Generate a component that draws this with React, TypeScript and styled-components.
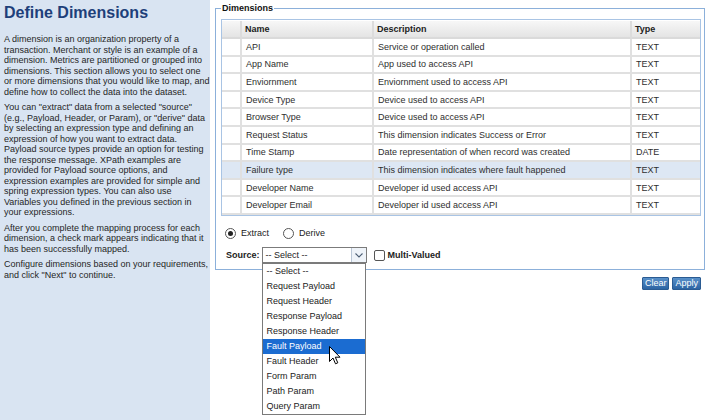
import React from "react";
import styled, { createGlobalStyle } from "styled-components";

const GlobalStyle = createGlobalStyle`
  html, body { margin: 0; padding: 0; background: #ffffff; }
  body { font-family: "Liberation Sans", Arial, sans-serif; }
  #root { width: 708px; height: 420px; overflow: hidden; }
`;

const Page = styled.div`
  display: flex;
  width: 708px;
  height: 420px;
`;

const Sidebar = styled.aside`
  flex: none;
  width: 210px;
  box-sizing: border-box;
  background: #d9e4f2;
  padding: 4px 2px 0 4px;
  color: #262626;
`;

const Title = styled.h1`
  margin: 0 0 12px;
  font-size: 16px;
  line-height: 18px;
  font-weight: bold;
  color: #1e3f7a;
`;

const Para = styled.p`
  margin: 0 0 5px;
  font-size: 9px;
  line-height: 10.5px;
  white-space: nowrap;
`;

const Main = styled.main`
  flex: 1;
  min-width: 0;
  padding: 3px 3px 0 5px;
  font-size: 9px;
  color: #333;
`;

const Fieldset = styled.fieldset`
  margin: 0;
  min-width: 0;
  padding: 5px 3px 6px 5px;
  border: 1px solid #8cb0da;
`;

const Legend = styled.legend`
  padding: 0 1px;
  font-size: 9px;
  line-height: 11px;
  font-weight: bold;
  color: #111;
`;

const TableBox = styled.div`
  border: 1px solid #a9c4e4;
  padding: 1px 0 0;
  height: 194px;
  background: #fff;
`;

const Table = styled.table`
  width: 100%;
  table-layout: fixed;
  border-collapse: separate;
  border-spacing: 0;
`;

const HeadCell = styled.th`
  height: 16px;
  padding: 0 0 0 3px;
  text-align: left;
  font-weight: bold;
  font-size: 9px;
  color: #222;
  background: linear-gradient(#f7f7f7, #e4e4e4);
  border-right: 2px solid #dcdcdc;
  border-bottom: 2px solid #dadada;
  &:last-child { border-right: none; }
`;

const Row = styled.tr<{ $selected?: boolean }>`
  background: ${(p) => (p.$selected ? "#dde7f4" : "#ffffff")};
`;

const Cell = styled.td`
  height: 15.6px;
  padding: 0 0 0 4px;
  font-size: 9px;
  color: #2e2e2e;
  white-space: nowrap;
  overflow: hidden;
  border-right: 2px solid #e0e0e0;
  border-bottom: 2px solid #e0e0e0;
  &:last-child { border-right: none; }
`;

const RadioRow = styled.div`
  display: flex;
  align-items: center;
  height: 14px;
  margin-top: 10px;
  padding-left: 4px;
`;

const RadioLabel = styled.label`
  display: flex;
  align-items: center;
  margin-right: 14px;
  color: #222;
`;

const RadioDot = styled.span<{ $checked?: boolean }>`
  position: relative;
  width: 11px;
  height: 11px;
  box-sizing: border-box;
  border-radius: 50%;
  border: 1px solid #555;
  background: #fff;
  margin-right: 5px;
  &::after {
    content: "";
    display: ${(p) => (p.$checked ? "block" : "none")};
    position: absolute;
    left: 2px;
    top: 2px;
    width: 5px;
    height: 5px;
    border-radius: 50%;
    background: #222;
  }
`;

const SourceRow = styled.div`
  display: flex;
  align-items: center;
  height: 16px;
  margin-top: 7px;
  padding-left: 5px;
`;

const BoldLabel = styled.span`
  font-weight: bold;
  color: #222;
`;

const SelectWrap = styled.div`
  position: relative;
  margin-left: 2px;
`;

const SelectBox = styled.div`
  display: flex;
  width: 105px;
  height: 16px;
  box-sizing: border-box;
  border: 1px solid #7b7b7b;
  background: #fff;
`;

const SelectValue = styled.span`
  flex: 1;
  padding-left: 3px;
  line-height: 14px;
  color: #222;
`;

const ArrowBox = styled.span`
  display: flex;
  align-items: center;
  justify-content: center;
  width: 14px;
  border-left: 1px solid #b9c6d6;
  background: #eef3f9;
`;

const DropList = styled.ul`
  position: absolute;
  left: 0;
  top: 16px;
  z-index: 5;
  width: 104px;
  box-sizing: border-box;
  margin: 0;
  padding: 0;
  list-style: none;
  border: 1px solid #7a7a7a;
  background: #fff;
`;

const DropItem = styled.li<{ $active?: boolean }>`
  height: 15px;
  line-height: 15px;
  padding-left: 4px;
  color: ${(p) => (p.$active ? "#ffffff" : "#222")};
  background: ${(p) => (p.$active ? "#1b6cd1" : "transparent")};
  white-space: nowrap;
`;

const Pointer = styled.svg`
  position: absolute;
  left: 67px;
  top: 99px;
  z-index: 6;
`;

const CheckBox = styled.span`
  width: 11px;
  height: 11px;
  box-sizing: border-box;
  border: 1px solid #555;
  border-radius: 2px;
  background: #fff;
  margin: 0 3px 0 7px;
`;

const ButtonRow = styled.div`
  display: flex;
  justify-content: flex-end;
  gap: 3px;
  margin-top: 7px;
  padding-right: 4px;
`;

const Button = styled.button`
  height: 13px;
  padding: 0 2px;
  font-family: "Liberation Sans", Arial, sans-serif;
  font-size: 9px;
  line-height: 11px;
  color: #fff;
  background: linear-gradient(#5890c9, #2c64a3);
  border: 1px solid #2a5b92;
  border-radius: 1px;
`;

const columns = [20, 132, 258];

const rows: [string, string, string][] = [
  ["API", "Service or operation called", "TEXT"],
  ["App Name", "App used to access API", "TEXT"],
  ["Enviornment", "Enviornment used to access API", "TEXT"],
  ["Device Type", "Device used to access API", "TEXT"],
  ["Browser Type", "Device used to access API", "TEXT"],
  ["Request Status", "This dimension indicates Success or Error", "TEXT"],
  ["Time Stamp", "Date representation of when record was created", "DATE"],
  ["Failure type", "This dimension indicates where fault happened", "TEXT"],
  ["Developer Name", "Developer id used access API", "TEXT"],
  ["Developer Email", "Developer id used access API", "TEXT"],
];

const options = [
  "-- Select --",
  "Request Payload",
  "Request Header",
  "Response Payload",
  "Response Header",
  "Fault Payload",
  "Fault Header",
  "Form Param",
  "Path Param",
  "Query Param",
];

export default function App() {
  return (
    <>
      <GlobalStyle />
      <Page>
        <Sidebar>
          <Title>Define Dimensions</Title>
          <Para>
            A dimension is an organization property of a<br />
            transaction. Merchant or style is an example of a<br />
            dimension. Metrics are partitioned or grouped into<br />
            dimensions. This section allows you to select one<br />
            or more dimensions that you would like to map, and<br />
            define how to collect the data into the dataset.
          </Para>
          <Para>
            You can "extract" data from a selected "source"<br />
            (e.g., Payload, Header, or Param), or "derive" data<br />
            by selecting an expression type and defining an<br />
            expression of how you want to extract data.<br />
            Payload source types provide an option for testing<br />
            the response message. XPath examples are<br />
            provided for Payload source options, and<br />
            expression examples are provided for simple and<br />
            spring expression types. You can also use<br />
            Variables you defined in the previous section in<br />
            your expressions.
          </Para>
          <Para>
            After you complete the mapping process for each<br />
            dimension, a check mark appears indicating that it<br />
            has been successfully mapped.
          </Para>
          <Para>
            Configure dimensions based on your requirements,<br />
            and click "Next" to continue.
          </Para>
        </Sidebar>
        <Main>
          <Fieldset>
            <Legend>Dimensions</Legend>
            <TableBox>
              <Table>
                <colgroup>
                  {columns.map((w, i) => (
                    <col key={i} style={{ width: w }} />
                  ))}
                  <col />
                </colgroup>
                <thead>
                  <tr>
                    <HeadCell />
                    <HeadCell>Name</HeadCell>
                    <HeadCell>Description</HeadCell>
                    <HeadCell>Type</HeadCell>
                  </tr>
                </thead>
                <tbody>
                  {rows.map(([name, desc, type]) => (
                    <Row key={name} $selected={name === "Failure type"}>
                      <Cell />
                      <Cell>{name}</Cell>
                      <Cell>{desc}</Cell>
                      <Cell>{type}</Cell>
                    </Row>
                  ))}
                </tbody>
              </Table>
            </TableBox>
            <RadioRow>
              <RadioLabel>
                <RadioDot $checked />
                Extract
              </RadioLabel>
              <RadioLabel>
                <RadioDot />
                Derive
              </RadioLabel>
            </RadioRow>
            <SourceRow>
              <BoldLabel>Source:</BoldLabel>
              <SelectWrap>
                <SelectBox>
                  <SelectValue>-- Select --</SelectValue>
                  <ArrowBox>
                    <svg width="8" height="5" viewBox="0 0 8 5">
                      <path d="M0.5 0.5 L4 4 L7.5 0.5" fill="none" stroke="#4b5d73" strokeWidth="1.1" />
                    </svg>
                  </ArrowBox>
                </SelectBox>
                <DropList>
                  {options.map((o) => (
                    <DropItem key={o} $active={o === "Fault Payload"}>
                      {o}
                    </DropItem>
                  ))}
                </DropList>
                <Pointer width="12" height="19" viewBox="0 0 12 19">
                  <path
                    d="M0.5 0.5 L0.5 15.5 L4 12 L6.5 17.8 L8.8 16.8 L6.3 11.2 L11 11.2 Z"
                    fill="#ffffff"
                    stroke="#000000"
                    strokeWidth="1"
                    strokeLinejoin="round"
                  />
                </Pointer>
              </SelectWrap>
              <CheckBox />
              <BoldLabel>Multi-Valued</BoldLabel>
            </SourceRow>
          </Fieldset>
          <ButtonRow>
            <Button>Clear</Button>
            <Button>Apply</Button>
          </ButtonRow>
        </Main>
      </Page>
    </>
  );
}
